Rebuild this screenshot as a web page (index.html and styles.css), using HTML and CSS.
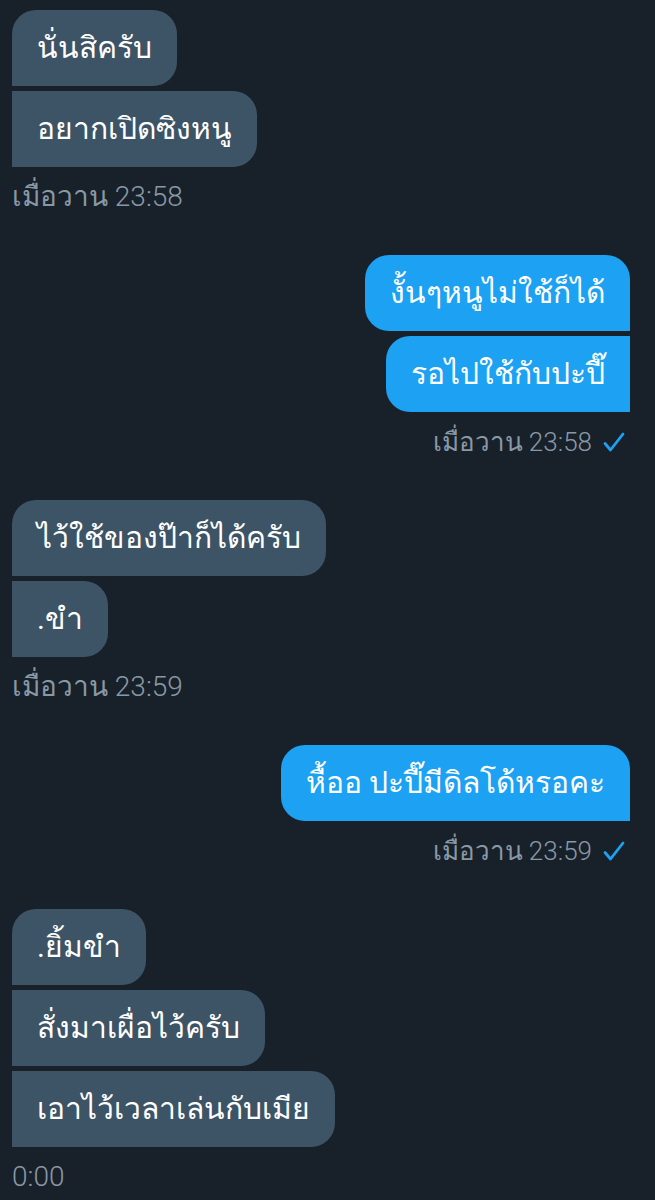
FILE: index.html
```html
<!DOCTYPE html>
<html lang="th">
<head>
    <meta charset="UTF-8">
    <meta name="viewport" content="width=device-width, initial-scale=1.0">
    <title>Messages</title>
    <link rel="stylesheet" href="styles.css">
</head>
<body>
    <div class="thread">
      <div class="group received">
        <div class="bubble">นั่นสิครับ</div>
        <div class="bubble">อยากเปิดซิงหนู</div>
        <div class="time">เมื่อวาน 23:58</div>
      </div>

      <div class="group sent">
        <div class="bubble">งั้นๆหนูไม่ใช้ก็ได้</div>
        <div class="bubble">รอไปใช้กับปะปี๊</div>
        <div class="time">เมื่อวาน 23:58 <svg class="check" viewBox="0 0 24 24"><path d="M3 13.5l5.5 6.5 12.5-16"/></svg></div>
      </div>

      <div class="group received">
        <div class="bubble">ไว้ใช้ของป๊าก็ได้ครับ</div>
        <div class="bubble">.ขำ</div>
        <div class="time">เมื่อวาน 23:59</div>
      </div>

      <div class="group sent">
        <div class="bubble">หื้ออ ปะปี๊มีดิลโด้หรอคะ</div>
        <div class="time">เมื่อวาน 23:59 <svg class="check" viewBox="0 0 24 24"><path d="M3 13.5l5.5 6.5 12.5-16"/></svg></div>
      </div>

      <div class="group received">
        <div class="bubble">.ยิ้มขำ</div>
        <div class="bubble">สั่งมาเผื่อไว้ครับ</div>
        <div class="bubble">เอาไว้เวลาเล่นกับเมีย</div>
        <div class="time">0:00</div>
      </div>
    </div>
</body>
</html>
```

FILE: styles.css
```css
body {
  margin: 0;
  background: #18202a;
  font-family: Roboto, "Noto Sans", sans-serif;
}
.thread {
  padding: 10px 25px 0 12px;
}
.group {
  display: flex;
  flex-direction: column;
  gap: 5px;
  margin-bottom: 40px;
}
.received {
  align-items: flex-start;
}
.sent {
  align-items: flex-end;
}
.bubble {
  color: #fff;
  font-size: 30px;
  line-height: 36px;
  padding: 20px 25px;
  border-radius: 0 24px 24px 0;
}
.received .bubble {
  background: #3d5466;
}
.received .bubble:first-child {
  border-top-left-radius: 24px;
}
.sent .bubble {
  background: #1da1f2;
  border-radius: 24px 0 0 24px;
}
.sent .bubble:first-child {
  border-top-right-radius: 24px;
}
.time {
  margin-top: 7px;
  color: #8899a6;
  font-size: 28px;
  font-weight: 300;
  line-height: 36px;
  display: flex;
  align-items: center;
  gap: 10px;
}
.sent .time {
  margin-right: 4px;
  font-size: 26px;
}
.check {
  width: 24px;
  height: 24px;
  fill: none;
  stroke: #1da1f2;
  stroke-width: 2.8;
  stroke-linecap: round;
  stroke-linejoin: round;
}
```
